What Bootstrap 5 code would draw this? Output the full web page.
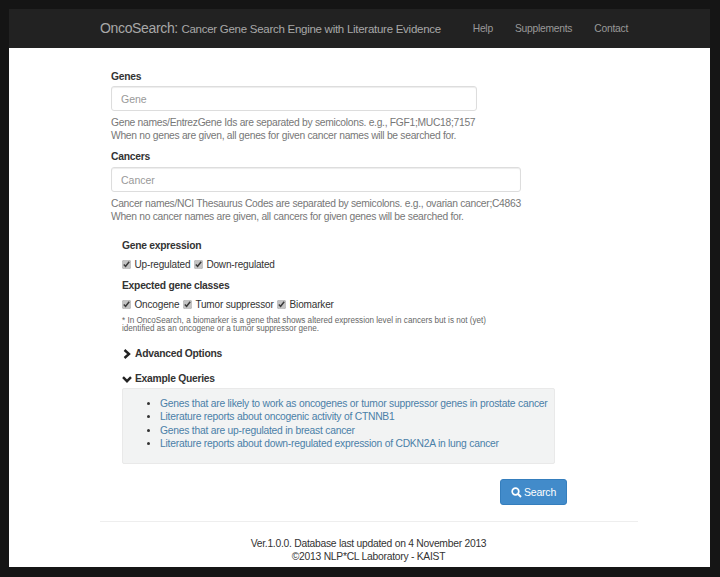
<!DOCTYPE html>
<html lang="en">
<head>
<meta charset="utf-8">
<title>OncoSearch</title>
<link href="https://cdn.jsdelivr.net/npm/bootstrap@5.3.0/dist/css/bootstrap.min.css" rel="stylesheet">
<style>
html,body{height:577px;overflow:hidden}
body{background:#151515;font-family:"Liberation Sans",Arial,sans-serif;font-size:10.3px;letter-spacing:-.25px;line-height:13.5px;color:#333;padding:9px 10px 10px 9px}
.shell{height:558px;background:#fff;display:flex;flex-direction:column}
.topbar{height:39px;background:#222;padding:0 82px 0 91px;flex:none}
.brand-name{font-size:14px;letter-spacing:-.35px;color:#a8a8a8;text-decoration:none;line-height:38px;white-space:nowrap}
.brand-sub{font-size:11.5px;letter-spacing:-.27px}
.toplink{color:#999;text-decoration:none;line-height:38px}
.toplinks{gap:22px}
.formwrap{padding:22px 0 0 102px}
.fld-label{font-weight:700;line-height:14px;margin:0 0 2px;color:#333;display:block}
.block-cancer .fld-label{margin-bottom:3px}
.fld-input.form-control{height:25px;border-radius:3px;font-size:10.5px;letter-spacing:0;padding:0 9px;border:1px solid #ddd;box-shadow:inset 0 1px 1px rgba(0,0,0,.075);color:#555}
.fld-input::placeholder{color:#999}
.w-gene{width:366px}
.w-cancer{width:410px}
.hint{color:#777;margin:5px 0 0;line-height:13px;white-space:nowrap;letter-spacing:-.29px}
.block-cancer{margin-top:8px}
.opts{margin:16px 0 0 11px}
.opt-title{font-weight:700;line-height:14px;margin:0;color:#333}
.chk-row{margin:5px 0 0;display:flex;align-items:center;height:14px;white-space:nowrap;gap:3.5px;font-size:10px;letter-spacing:-.16px}
.chk-row input{accent-color:#c4c4c4;width:9px;height:9px;margin:0 0 2px 0}
.opt-title.second{margin-top:7px}
.fine{font-size:8.15px;letter-spacing:0;line-height:8px;color:#666;margin:5px 0 0;width:378px}
.fold{font-weight:700;line-height:14px;margin:0;display:flex;align-items:center;gap:3px;color:#333}
.fold-adv{margin-top:14px}
.fold-ex{margin-top:11px}
.examples{width:433px;height:76px;background:#f2f3f3;border:1px solid #e9e9e9;margin-top:2px;padding:7.5px 0 0 37px;border-radius:2px}
.examples ul{margin:0;padding:0}
.examples li{line-height:13.5px;color:#333;letter-spacing:-.23px}
.examples a{color:#4a80a8;text-decoration:none;white-space:nowrap}
.submit-row{width:445px;margin-top:15px;display:flex;justify-content:flex-end}
.go.btn{height:26px;width:67px;font-size:10.5px;letter-spacing:-.2px;line-height:14px;padding:0;background:#428bca;border:1px solid #357ebd;border-radius:3px;color:#fff;display:flex;align-items:center;justify-content:center;gap:2px}
.sep{border:0;border-top:1px solid #eee;opacity:1;margin:16px 72px 0 91px}
.foot{text-align:center;color:#333;line-height:13px;padding:15px 0 0 18px;margin:0}
</style>
</head>
<body>
<div class="shell">
  <nav class="topbar d-flex align-items-center justify-content-between">
    <a class="brand-name" href="#">OncoSearch: <span class="brand-sub">Cancer Gene Search Engine with Literature Evidence</span></a>
    <div class="d-flex toplinks">
      <a class="toplink" href="#">Help</a>
      <a class="toplink" href="#">Supplements</a>
      <a class="toplink" href="#">Contact</a>
    </div>
  </nav>
  <div class="formwrap">
    <label class="fld-label" for="g">Genes</label>
    <input id="g" class="form-control fld-input w-gene" placeholder="Gene">
    <p class="hint">Gene names/EntrezGene Ids are separated by semicolons. e.g., FGF1;MUC18;7157<br>When no genes are given, all genes for given cancer names will be searched for.</p>
    <div class="block-cancer">
      <label class="fld-label" for="c">Cancers</label>
      <input id="c" class="form-control fld-input w-cancer" placeholder="Cancer">
      <p class="hint">Cancer names/NCI Thesaurus Codes are separated by semicolons. e.g., ovarian cancer;C4863<br>When no cancer names are given, all cancers for given genes will be searched for.</p>
    </div>
    <div class="opts">
      <p class="opt-title">Gene expression</p>
      <div class="chk-row"><input type="checkbox" checked id="a"><label for="a">Up-regulated</label><input type="checkbox" checked id="b"><label for="b">Down-regulated</label></div>
      <p class="opt-title second">Expected gene classes</p>
      <div class="chk-row"><input type="checkbox" checked id="d"><label for="d">Oncogene</label><input type="checkbox" checked id="e"><label for="e">Tumor suppressor</label><input type="checkbox" checked id="f"><label for="f">Biomarker</label></div>
      <p class="fine">* In OncoSearch, a biomarker is a gene that shows altered expression level in cancers but is not (yet) identified as an oncogene or a tumor suppressor gene.</p>
      <p class="fold fold-adv"><svg width="10" height="10" viewBox="0 0 10 10"><path d="M2.5 1l4.5 4-4.5 4" fill="none" stroke="#222" stroke-width="2.4"/></svg>Advanced Options</p>
      <p class="fold fold-ex"><svg width="10" height="9" viewBox="0 0 10 9"><path d="M1 2.2l4 4 4-4" fill="none" stroke="#222" stroke-width="2.4"/></svg>Example Queries</p>
      <div class="examples">
        <ul>
          <li><a href="#">Genes that are likely to work as oncogenes or tumor suppressor genes in prostate cancer</a></li>
          <li><a href="#">Literature reports about oncogenic activity of CTNNB1</a></li>
          <li><a href="#">Genes that are up-regulated in breast cancer</a></li>
          <li><a href="#">Literature reports about down-regulated expression of CDKN2A in lung cancer</a></li>
        </ul>
      </div>
      <div class="submit-row">
        <button type="button" class="btn go"><svg width="11" height="11" viewBox="0 0 11 11"><circle cx="4.5" cy="4.5" r="3.3" fill="none" stroke="#fff" stroke-width="1.7"/><path d="M7 7l3 3" stroke="#fff" stroke-width="2"/></svg>Search</button>
      </div>
    </div>
  </div>
  <hr class="sep">
  <p class="foot">Ver.1.0.0. Database last updated on 4 November 2013<br>©2013 NLP*CL Laboratory - KAIST</p>
</div>
<script src="https://cdn.jsdelivr.net/npm/bootstrap@5.3.0/dist/js/bootstrap.bundle.min.js"></script>
</body>
</html>
